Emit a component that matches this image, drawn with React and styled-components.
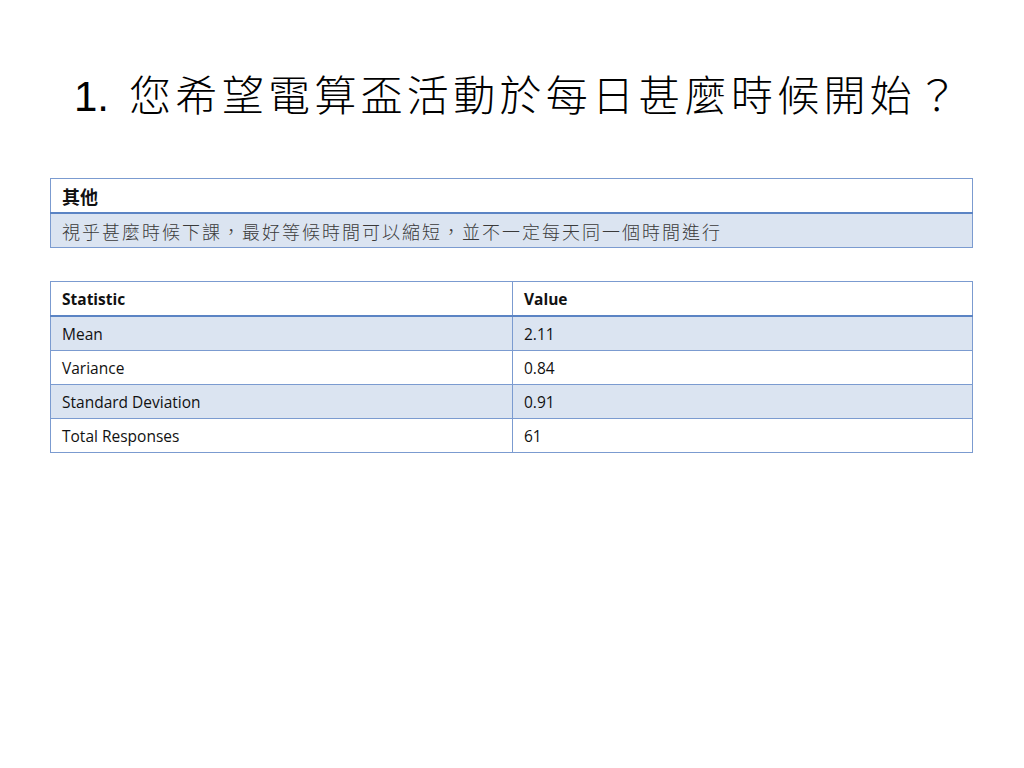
import styled, { createGlobalStyle } from "styled-components";

const GlobalStyle = createGlobalStyle`
  html, body {
    margin: 0;
    padding: 0;
    background: #ffffff;
  }
`;

const Slide = styled.div`
  width: 1024px;
  height: 768px;
  box-sizing: border-box;
  padding: 66px 51px 0 50px;
  background: #ffffff;
  font-family: "Open Sans", "Noto Sans CJK TC", sans-serif;
`;

const Title = styled.h1`
  margin: 0 0 0 24px;
  height: 112px;
  font-family: "Liberation Sans", "Noto Sans CJK TC", sans-serif;
  font-weight: 300;
  font-size: 42px;
  line-height: 62px;
  color: #000000;
  letter-spacing: 4.3px;
  white-space: nowrap;

  .num {
    margin-right: 20px;
    letter-spacing: 0;
  }
`;

const Table = styled.table`
  width: 923px;
  table-layout: fixed;
  border-collapse: collapse;
  margin-bottom: 33px;
  font-size: 15.5px;
  color: #111111;
`;

const HeadCell = styled.th`
  height: 33px;
  padding: 0 11px;
  text-align: left;
  font-weight: 700;
  border: 1px solid #7b9bd0;
  border-bottom: 2px solid #5b84c4;
  background: #ffffff;
  white-space: nowrap;
  width: ${(p) => p.$width || "auto"};
  font-family: ${(p) =>
    p.$cjk ? '"Noto Sans CJK TC", sans-serif' : '"Open Sans", sans-serif'};
  font-size: ${(p) => (p.$cjk ? "18px" : "15.5px")};
`;

const Row = styled.tr`
  background: ${(p) => (p.$shaded ? "#dbe4f1" : "#ffffff")};
`;

const Cell = styled.td`
  height: 33px;
  padding: 0 11px;
  border: 1px solid #7b9bd0;
  white-space: nowrap;
  font-family: ${(p) =>
    p.$cjk ? '"Noto Sans CJK TC", sans-serif' : '"Open Sans", sans-serif'};
  font-size: ${(p) => (p.$cjk ? "18px" : "15.5px")};
  letter-spacing: ${(p) => (p.$cjk ? "2px" : "0")};
  color: ${(p) => (p.$cjk ? "#3a3a3a" : "#111111")};
  font-weight: ${(p) => (p.$cjk ? 300 : 400)};
`;

const stats = [
  ["Mean", "2.11"],
  ["Variance", "0.84"],
  ["Standard Deviation", "0.91"],
  ["Total Responses", "61"],
];

export default function App() {
  return (
    <>
      <GlobalStyle />
      <Slide>
        <Title>
          <span className="num">1.</span>您希望電算盃活動於每日甚麼時候開始？
        </Title>
        <Table>
          <thead>
            <tr>
              <HeadCell $cjk>其他</HeadCell>
            </tr>
          </thead>
          <tbody>
            <Row $shaded>
              <Cell $cjk>
                視乎甚麼時候下課，最好等候時間可以縮短，並不一定每天同一個時間進行
              </Cell>
            </Row>
          </tbody>
        </Table>
        <Table>
          <thead>
            <tr>
              <HeadCell $width="439px">Statistic</HeadCell>
              <HeadCell>Value</HeadCell>
            </tr>
          </thead>
          <tbody>
            {stats.map(([label, value], i) => (
              <Row key={label} $shaded={i % 2 === 0}>
                <Cell>{label}</Cell>
                <Cell>{value}</Cell>
              </Row>
            ))}
          </tbody>
        </Table>
      </Slide>
    </>
  );
}
